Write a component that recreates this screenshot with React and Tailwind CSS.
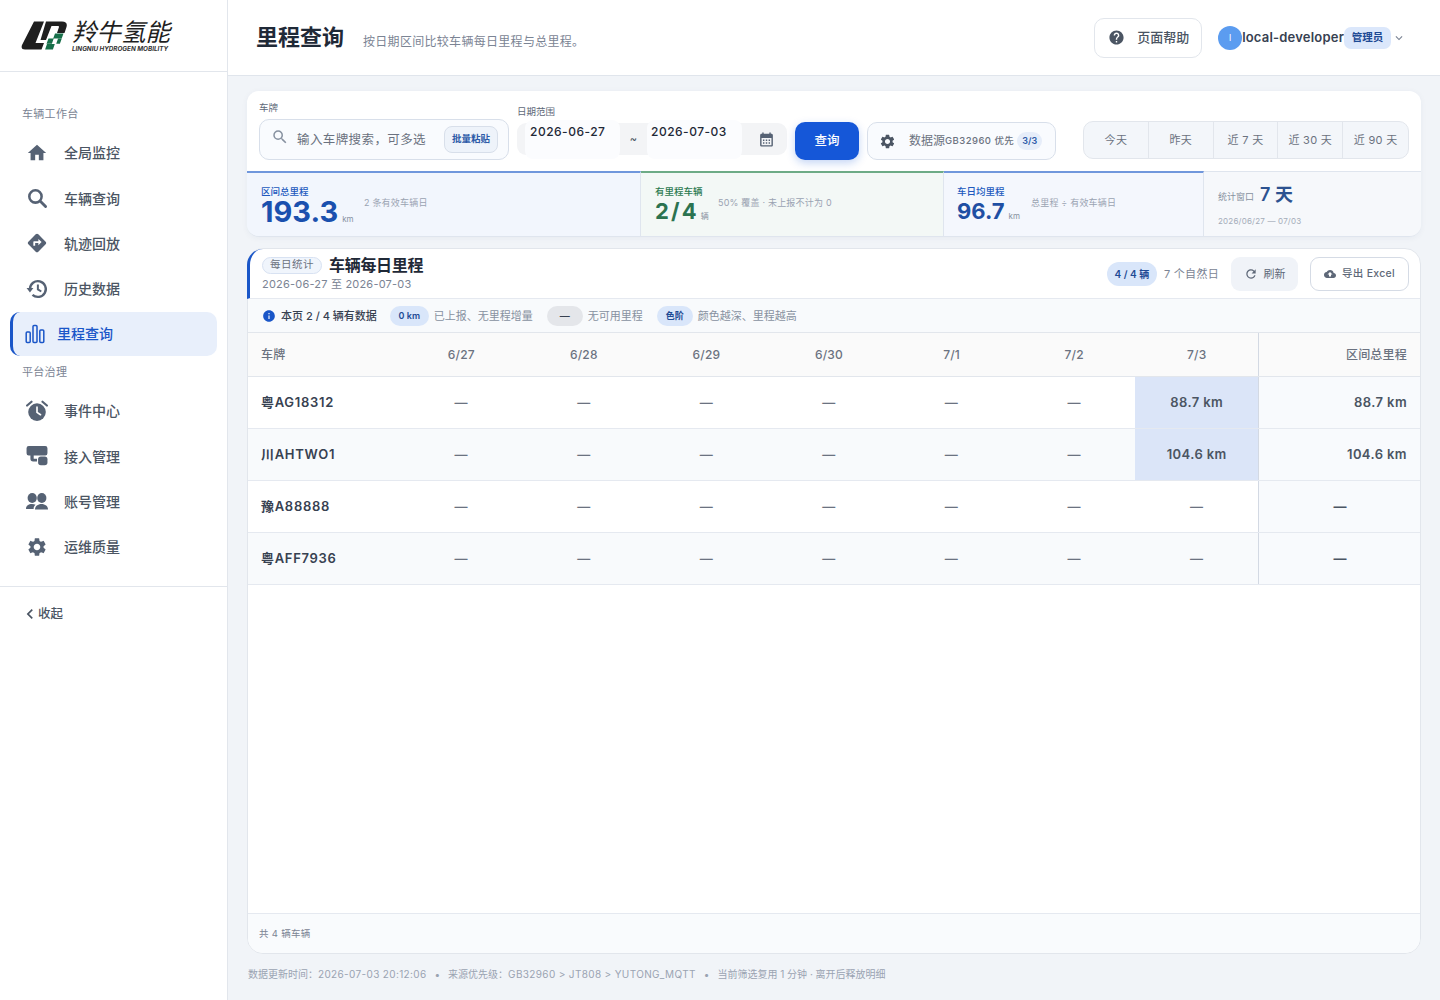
import {
  MdHome,
  MdSearch,
  MdDirections,
  MdSettings,
  MdChevronLeft,
  MdHelp,
  MdCalendarMonth,
  MdInfo,
  MdRefresh,
  MdCloudUpload,
  MdExpandMore,
} from 'react-icons/md';

const FONT = "font-['Inter','Noto_Sans_CJK_SC','Noto_Sans',sans-serif]";

const days = ['6/27', '6/28', '6/29', '6/30', '7/1', '7/2', '7/3'];

const rows = [
  { plate: '粤AG18312', last: '88.7 km', total: '88.7 km' },
  { plate: '川AHTWO1', last: '104.6 km', total: '104.6 km' },
  { plate: '豫A88888', last: null, total: null },
  { plate: '粤AFF7936', last: null, total: null },
];

// 这几个图标包里没有一样的,直接画
function BoldSearchIcon({ className }) {
  return (
    <svg viewBox="0 0 20 20" className={className} fill="none" stroke="currentColor" strokeLinecap="round">
      <circle cx="8.6" cy="8.6" r="5.6" strokeWidth="2.3" />
      <path d="M13 13l4.8 4.8" strokeWidth="2.6" />
    </svg>
  );
}

function BoldHistoryIcon({ className }) {
  return (
    <svg viewBox="0 0 20 20" className={className}>
      <path d="M3.600 10a7.200 7.200 0 1 1 2.300 5.300" fill="none" stroke="currentColor" strokeWidth="2.100" />
      <path d="M0.500 9.200h6.200l-3.100 4z" fill="currentColor" />
      <path d="M10.800 5.800v4.600l3.100 1.900" fill="none" stroke="currentColor" strokeWidth="1.800" />
    </svg>
  );
}

function AccessIcon({ className }) {
  return (
    <svg viewBox="0 0 20 20" className={className} fill="currentColor">
      <path d="M2.500 1h15a2 2 0 0 1 2 2v4.500a2 2 0 0 1-2 2H7v3h3V15H6.500A2.500 2.500 0 0 1 4 12.500v-3H2.500a2 2 0 0 1-2-2V3a2 2 0 0 1 2-2z" />
      <rect x="11" y="10.500" width="8.500" height="8" rx="2.500" />
    </svg>
  );
}

function AlarmIcon({ className }) {
  return (
    <svg viewBox="0 0 20 20" className={className}>
      <circle cx="10" cy="11" r="8" fill="currentColor" />
      <path d="M10 6.500V11.200L13.200 13.400" fill="none" stroke="#fff" strokeWidth="1.500" strokeLinecap="round" />
      <path d="M1 5 5 1.600M19 5 15 1.600" fill="none" stroke="currentColor" strokeWidth="2" strokeLinecap="round" />
    </svg>
  );
}

function TeamIcon({ className }) {
  return (
    <svg viewBox="0 0 22 20" className={className} fill="currentColor">
      <ellipse cx="6.200" cy="7" rx="4.600" ry="5" />
      <ellipse cx="15.800" cy="7" rx="4.600" ry="5" />
      <path d="M0 18c0-3.200 2.500-5 6-5 1.400 0 2.600.3 3.600.8-1.200.9-2 2.300-2 4.200H.8a.8.8 0 0 1-.8 0z" />
      <path d="M9 18.500c0-3.200 2.800-5.500 6.500-5.500s6.500 2.300 6.500 5.500H9z" />
    </svg>
  );
}

function BarsIcon({ className }) {
  return (
    <svg viewBox="0 0 20 20" className={className} fill="none" stroke="currentColor" strokeWidth="1.5">
      <rect x="1.2" y="8" width="4" height="10.5" rx="1" />
      <rect x="8" y="1.5" width="4" height="17" rx="1" />
      <rect x="14.8" y="6" width="4" height="12.5" rx="1" />
    </svg>
  );
}

const groups = [
  {
    label: '车辆工作台',
    items: [
      { name: '全局监控', Icon: MdHome },
      { name: '车辆查询', Icon: BoldSearchIcon },
      { name: '轨迹回放', Icon: MdDirections },
      { name: '历史数据', Icon: BoldHistoryIcon },
      { name: '里程查询', Icon: BarsIcon, active: true },
    ],
  },
  {
    label: '平台治理',
    items: [
      { name: '事件中心', Icon: AlarmIcon },
      { name: '接入管理', Icon: AccessIcon },
      { name: '账号管理', Icon: TeamIcon },
      { name: '运维质量', Icon: MdSettings },
    ],
  },
];

function Logo() {
  return (
    <div className="flex items-start gap-[6px]">
      <svg viewBox="0 0 46 31" className="w-[46px] h-[31px]">
        <path d="M13 1.500H23L14.500 23H23L20.500 29.500H4Q-0.500 29.500 1 25Z" fill="#1f1f1f" />
        <path d="M25 1.500H41Q47 1.500 45.500 7L43.500 13H36L38 7Q38.300 6 37 6H30.500L25 20H19.500Z" fill="#1f1f1f" />
        <path d="M34 13.500h8.500l-1.800 5h-8.500zM27.500 18.500h5.200l-1.800 5.300h-5.400zM37 18.700h3.700l-1.800 5.100h-3.700zM26 24h7.800l-1.900 5.500h-7.800z" fill="#17704a" />
      </svg>
      <div className="flex flex-col -ml-[1px]">
        <span className="text-[24.5px] leading-[25px] font-normal italic text-[#1f1f1f] whitespace-nowrap">羚牛氢能</span>
        <span className="text-[6.3px] leading-[8px] font-bold italic text-[#333] whitespace-nowrap">
          LINGNIU HYDROGEN MOBILITY
        </span>
      </div>
    </div>
  );
}

function Sidebar() {
  return (
    <aside className="w-[228px] shrink-0 bg-white border-r border-[#e2e6ec] flex flex-col">
      <div className="h-[72px] shrink-0 border-b border-[#e2e6ec] pl-[21px] pt-[20px]">
        <Logo />
      </div>
      <nav className="pt-[25.75px] pb-[17.25px] px-[10px] border-b border-[#e2e6ec]">
        {groups.map((group) => (
          <div key={group.label}>
            <div className="h-[33px] flex items-center pl-[12px] text-[11px] text-[#7b8494] tracking-[0.3px]">
              {group.label}
            </div>
            <div className="flex flex-col gap-[1.25px]">
              {group.items.map(({ name, Icon, active }) =>
                active ? (
                  <div
                    key={name}
                    className="h-[44px] flex items-center pl-[13px] rounded-[10px] bg-[#e8effb] border-l-[3px] border-[#1a56c8] text-[#1a56c8] text-[14px] font-medium"
                  >
                    <Icon className="w-[20px] h-[20px] mr-[12px] -ml-[1px]" />
                    {name}
                  </div>
                ) : (
                  <div
                    key={name}
                    className="h-[44px] flex items-center pl-[16px] text-[#4b5563] text-[14px] font-medium"
                  >
                    <Icon className="w-[22px] h-[22px] mr-[16px] text-[#566274]" />
                    {name}
                  </div>
                )
              )}
            </div>
          </div>
        ))}
      </nav>
      <div className="h-[54px] flex items-center pl-[22px] pt-[1px] text-[12.5px] font-medium text-[#4b5563]">
        <MdChevronLeft className="w-[16px] h-[18px] scale-125" />
        收起
      </div>
    </aside>
  );
}

function Header() {
  return (
    <header className="h-[76px] shrink-0 bg-white border-b border-[#e0e5ec] flex items-center pl-[28px] pr-[34px]">
      <h1 className="text-[22px] font-semibold text-[#1f2937]">里程查询</h1>
      <p className="ml-[19px] mt-[9px] text-[12px] text-[#7b8494] tracking-[0.3px]">按日期区间比较车辆每日里程与总里程。</p>
      <button className="ml-auto h-[40px] w-[108px] flex items-center pl-[13px] rounded-[10px] border border-[#e2e6ec] bg-white text-[13px] font-medium text-[#4b5563]">
        <MdHelp className="w-[17px] h-[17px] mr-[12px]" />
        <span className="mt-[1px]">页面帮助</span>
      </button>
      <div className="ml-[16px] flex items-center">
        <span className="w-[24px] h-[24px] rounded-full bg-[#5b9cf0] text-white text-[9px] flex items-center justify-center">l</span>
        <span className="text-[13px] font-semibold text-[#374151] tracking-[0.2px] mt-[1px]">local-developer</span>
        <span className="h-[22px] w-[47px] flex items-center justify-center rounded-[7px] bg-[#dbe7fb] text-[10.5px] font-semibold text-[#1e4a94]">管理员</span>
        <MdExpandMore className="w-[14px] h-[14px] ml-[1px] text-[#7b8494]" />
      </div>
    </header>
  );
}

function FilterRow() {
  return (
    <div className="h-[80px] bg-white flex items-end px-[12px] pb-[10px]">
      <div className="w-[250px] mb-[1px]">
        <div className="text-[9.5px] leading-[12px] text-[#5e6878] mb-[5px]">车牌</div>
        <div className="h-[41px] rounded-[10px] border border-[#d8dfea] bg-[#f9fbfe] flex items-center pl-[11px] pr-[10px]">
          <MdSearch className="w-[18px] h-[18px] text-[#8791a0] -mt-[6px] mr-[8px]" />
          <span className="text-[12.5px] text-[#6b7280] tracking-[0.4px] mt-[2px]">{'输入车牌搜索\uFF0C可多选'}</span>
          <span className="ml-auto h-[27px] w-[54px] flex items-center justify-center rounded-[8px] border border-[#d8dfea] bg-[#eef3fa] text-[9.5px] font-semibold text-[#2c5aa8]">
            批量粘贴
          </span>
        </div>
      </div>
      <div className="ml-[8px] w-[270px] mb-[6px]">
        <div className="text-[9.5px] leading-[12px] text-[#5e6878] mb-[5px]">日期范围</div>
        <div className="h-[32px] rounded-[9px] bg-[#f3f4f6] flex items-center pl-[8px] pr-[12px]">
          <div className="w-[95px] h-[39px] rounded-[8px] bg-[#fbfcfe] pl-[5px] pt-[3px] text-[12px] font-medium text-[#1f2937] tracking-[0.5px]">2026-06-27</div>
          <div className="w-[27px] text-center text-[11px] text-[#4b5563]">~</div>
          <div className="w-[95px] h-[39px] rounded-[8px] bg-[#fbfcfe] pl-[4px] pt-[3px] text-[12px] font-medium text-[#1f2937] tracking-[0.5px]">2026-07-03</div>
          <MdCalendarMonth className="ml-auto w-[17px] h-[17px] text-[#566274]" />
        </div>
      </div>
      <button className="ml-[8px] mb-[1px] w-[64px] h-[38px] rounded-[10px] bg-[#1557d8] text-white text-[12.5px] font-medium shadow-[0_3px_8px_rgba(21,87,216,0.25)]">
        查询
      </button>
      <div className="ml-[8px] mb-[1px] w-[189px] h-[38px] rounded-[10px] border border-[#d8dfea] bg-[#f9fbfe] flex items-center pl-[11px]">
        <MdSettings className="w-[17px] h-[17px] text-[#4b5563] mr-[13px]" />
        <span className="text-[12px] text-[#6b7280]">数据源</span>
        <span className="text-[9.5px] text-[#6b7280] font-medium tracking-[0.45px]">GB32960 优先</span>
        <span className="ml-[3px] h-[18px] px-[5px] flex items-center rounded-full bg-[#e6edf9] text-[9px] font-semibold text-[#2c5aa8]">3/3</span>
      </div>
      <div className="ml-[27px] mb-[2px] w-[326px] h-[38px] rounded-[10px] border border-[#e2e6ec] bg-[#f3f6fa] grid grid-cols-5 items-center">
        {['今天', '昨天', '近 7 天', '近 30 天', '近 90 天'].map((label, i) => (
          <div
            key={label}
            className={`h-full flex items-center justify-center text-[11px] text-[#6b7280] tracking-[0.3px] ${i < 4 ? 'border-r border-[#e2e6ec]' : ''}`}
          >
            {label}
          </div>
        ))}
      </div>
    </div>
  );
}

function StatRow() {
  return (
    <div className="h-[66px] grid grid-cols-[394px_303px_260px_1fr]">
      <div className="bg-[#f2f6fd] border-t-2 border-[#7097dc] border-r border-r-[#dfe5ee] pl-[14px] pt-[13px] flex">
        <div className="w-[103px]">
          <div className="text-[9.5px] leading-[12px] font-medium text-[#2159bd]">区间总里程</div>
          <div className="flex items-baseline">
            <span className="text-[29px] leading-[27px] font-bold text-[#1a50ae]">193.3</span>
            <span className="ml-[4px] text-[8px] text-[#8791a0]">km</span>
          </div>
        </div>
        <div className="text-[9px] text-[#9aa3b2] mt-[10px] tracking-[0.2px]">2 条有效车辆日</div>
      </div>
      <div className="bg-[#f3f8f6] border-t-2 border-[#6dab86] border-r border-r-[#dfe5ee] pl-[14px] pt-[13px] flex">
        <div className="w-[63px]">
          <div className="text-[9.5px] leading-[12px] font-medium text-[#2c7a50]">有里程车辆</div>
          <div className="flex items-baseline">
            <span className="text-[22px] leading-[27px] font-bold text-[#2b7350] [word-spacing:-3px] whitespace-nowrap">2 / 4</span>
            <span className="ml-[4px] text-[8px] text-[#8791a0]">辆</span>
          </div>
        </div>
        <div className="text-[9px] text-[#9aa3b2] mt-[10px] tracking-[0.2px]">50% 覆盖 · 未上报不计为 0</div>
      </div>
      <div className="bg-[#f4f7fd] border-t-2 border-[#7097dc] border-r border-r-[#dfe5ee] pl-[13px] pt-[13px] flex">
        <div className="w-[74px]">
          <div className="text-[9.5px] leading-[12px] font-medium text-[#2159bd]">车日均里程</div>
          <div className="flex items-baseline">
            <span className="text-[22px] leading-[27px] font-bold text-[#1f4fa3]">96.7</span>
            <span className="ml-[4px] text-[8px] text-[#8791a0]">km</span>
          </div>
        </div>
        <div className="text-[9px] text-[#9aa3b2] mt-[10px] tracking-[0.2px]">总里程 ÷ 有效车辆日</div>
      </div>
      <div className="bg-[#f6f8fb] border-t border-[#dfe5ee] pl-[14px] pt-[11px]">
        <div className="flex items-center">
          <span className="text-[9px] text-[#8791a0] mt-[3px]">统计窗口</span>
          <span className="ml-[6px] text-[18px] leading-[24px] font-semibold text-[#2c5290]">7 天</span>
        </div>
        <div className="text-[8px] text-[#a4acb9] mt-[8px] tracking-[0.2px]">2026/06/27 — 07/03</div>
      </div>
    </div>
  );
}

function TableHead() {
  return (
    <div className="h-[50px] shrink-0 -ml-[1px] rounded-tl-[16px] border-l-[3px] border-[#1a56c8] border-b border-b-[#e5e9f0] flex items-start pl-[12px] pr-[11px]">
      <div className="pt-[6px]">
        <div className="flex items-center">
          <span className="h-[17px] w-[60px] flex items-center justify-center rounded-full border border-[#d8e2f2] bg-[#f0f5fc] text-[10.5px] text-[#6b7280] tracking-[0.5px]">每日统计</span>
          <span className="ml-[7px] text-[16px] leading-[20px] font-semibold text-[#1f2937] tracking-[-0.3px]">车辆每日里程</span>
        </div>
        <div className="text-[11px] leading-[14px] mt-[2px] text-[#7b8494] tracking-[0.2px]">2026-06-27 至 2026-07-03</div>
      </div>
      <div className="ml-auto flex items-center pt-[8px]">
        <span className="h-[24px] w-[50px] flex items-center justify-center rounded-full bg-[#d9e6fa] text-[10px] font-semibold text-[#1e4a94]">4 / 4 辆</span>
        <span className="ml-[7px] text-[11px] text-[#7b8494] tracking-[0.3px]">7 个自然日</span>
        <button className="ml-[12px] w-[67px] h-[34px] flex items-center justify-center rounded-[9px] bg-[#f0f3f8] text-[11px] text-[#5e6878]">
          <MdRefresh className="w-[14px] h-[14px] mr-[6px]" />
          刷新
        </button>
        <button className="ml-[12px] w-[99px] h-[34px] flex items-center justify-center rounded-[9px] border border-[#d5dbe5] bg-white text-[10.5px] text-[#5e6878] font-medium tracking-[0.3px]">
          <MdCloudUpload className="w-[12px] h-[12px] mr-[6px]" />
          导出 Excel
        </button>
      </div>
    </div>
  );
}

function Legend() {
  return (
    <div className="h-[34px] shrink-0 bg-[#f8fafc] border-b border-[#e2e6ec] flex items-center pl-[14px] pt-[1px] text-[11px] text-[#8791a0]">
      <MdInfo className="w-[14px] h-[14px] text-[#1a56c8] mr-[5px]" />
      <span className="font-medium text-[#374151]">本页 2 / 4 辆有数据</span>
      <span className="ml-[13px] h-[20px] w-[39px] flex items-center justify-center rounded-full bg-[#d9e6fa] text-[9px] font-semibold text-[#1e4a94]">0 km</span>
      <span className="ml-[5px]">已上报、无里程增量</span>
      <span className="ml-[14px] h-[20px] w-[36px] flex items-center justify-center rounded-full bg-[#e4e6ea] text-[10px] font-semibold text-[#374151]">—</span>
      <span className="ml-[5px]">无可用里程</span>
      <span className="ml-[14px] h-[20px] w-[36px] flex items-center justify-center rounded-full bg-[#d9e6fa] text-[9px] font-semibold text-[#1e4a94]">色阶</span>
      <span className="ml-[5px]">颜色越深、里程越高</span>
    </div>
  );
}

const GRID = 'grid grid-cols-[152px_repeat(7,1fr)_162px]';

function DataTable() {
  return (
    <div className="flex-1 bg-white">
      <div className={`${GRID} h-[44px] bg-[#fafafa] border-b border-[#e2e6ec] items-stretch text-[12px] font-medium text-[#6b7280] tracking-[0.2px]`}>
        <div className="pl-[13px] flex items-center">车牌</div>
        {days.map((d) => (
          <div key={d} className="flex items-center justify-center">{d}</div>
        ))}
        <div className="flex items-center justify-end pr-[13px] border-l border-[#d3d9e3]">区间总里程</div>
      </div>
      {rows.map((row, i) => (
        <div
          key={row.plate}
          className={`${GRID} h-[52px] border-b border-[#e5e9f0] text-[13px] tracking-[0.4px] ${i % 2 ? 'bg-[#f8fafc]' : 'bg-white'}`}
        >
          <div className="pl-[13px] flex items-center font-semibold text-[#374151] tracking-[0.7px]">{row.plate}</div>
          {days.map((d, j) => {
            const filled = j === 6 && row.last;
            return (
              <div
                key={d}
                className={`flex items-center justify-center font-medium ${filled ? 'bg-[#dbe5f8] text-[#4b5563] font-semibold' : 'text-[#6b7280]'}`}
              >
                {filled ? row.last : '—'}
              </div>
            );
          })}
          <div className="flex items-center justify-end border-l border-[#d3d9e3] bg-[#f8fafd] pr-[13px] font-semibold text-[#4b5563]">
            {row.total || <span className="pr-[60px] font-bold">—</span>}
          </div>
        </div>
      ))}
    </div>
  );
}

export default function App() {
  return (
    <div className={`h-screen w-full flex overflow-hidden bg-[#f1f4f8] ${FONT}`}>
      <Sidebar />
      <div className="flex-1 min-w-0 flex flex-col">
        <Header />
        <main className="flex-1 min-h-0 flex flex-col px-[19px] pt-[15px]">
          <section className="h-[146px] shrink-0 rounded-[12px] overflow-hidden border-b border-[#dfe5ee] shadow-[0_1px_6px_rgba(30,50,90,0.05)]">
            <FilterRow />
            <StatRow />
          </section>
          <section className="mt-[11px] h-[706px] shrink-0 rounded-[16px] border border-[#e2e6ec] bg-white flex flex-col">
            <TableHead />
            <Legend />
            <DataTable />
            <div className="h-[40px] shrink-0 rounded-b-[15px] border-t border-[#e5e9f0] bg-[#f9fbfd] flex items-center pl-[11px] pt-[2px] text-[9.5px] text-[#7b8494] tracking-[0.3px]">
              共 4 辆车辆
            </div>
          </section>
          <div className="mt-[13px] pl-[1px] text-[10px] text-[#9aa3b2] whitespace-nowrap">
            {'数据更新时间\uFF1A'}
            <span className="tracking-[0.35px]">2026-07-03 20:12:06</span>
            <span className="mx-[8px]">•</span>
            {'来源优先级\uFF1A'}
            <span className="tracking-[0.35px]">GB32960 &gt; JT808 &gt; YUTONG_MQTT</span>
            <span className="mx-[8px]">•</span>
            当前筛选复用 1 分钟 · 离开后释放明细
          </div>
        </main>
      </div>
    </div>
  );
}
